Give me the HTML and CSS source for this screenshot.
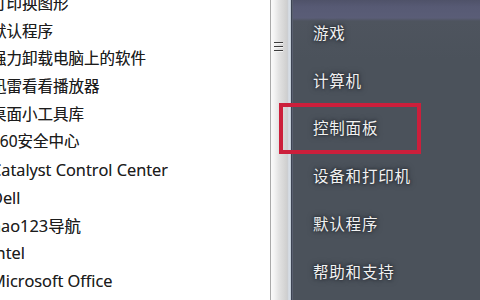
FILE: index.html
```html
<!DOCTYPE html>
<html lang="zh-CN">
<head>
<meta charset="utf-8">
<title>开始菜单</title>
<link rel="stylesheet" href="styles.css">
</head>
<body>
<div class="menu">
  <div class="programs">
    <ul class="prog-list">
      <li>打印换图形</li>
      <li>默认程序</li>
      <li>强力卸载电脑上的软件</li>
      <li>迅雷看看播放器</li>
      <li>桌面小工具库</li>
      <li>360安全中心</li>
      <li class="latin">Catalyst Control Center</li>
      <li class="latin">Dell</li>
      <li class="latin">hao123导航</li>
      <li class="latin">Intel</li>
      <li class="latin">Microsoft Office</li>
    </ul>
  </div>
  <div class="scrollbar">
    <div class="thumb">
      <span class="grip"></span>
      <span class="grip"></span>
      <span class="grip"></span>
    </div>
  </div>
  <div class="places">
    <ul class="place-list">
      <li><span class="label">游戏</span></li>
      <li><span class="label">计算机</span></li>
      <li><span class="label">控制面板</span></li>
      <li><span class="label">设备和打印机</span></li>
      <li><span class="label">默认程序</span></li>
      <li><span class="label">帮助和支持</span></li>
    </ul>
  </div>
  <div class="highlight"></div>
</div>
</body>
</html>
```

FILE: styles.css
```css
* { box-sizing: border-box; }
html, body {
  margin: 0;
  padding: 0;
}
body {
  width: 480px;
  height: 300px;
  overflow: hidden;
  background: #fff;
}
.menu {
  position: relative;
  display: flex;
  width: 480px;
  height: 300px;
  overflow: hidden;
}
.programs {
  width: 270px;
  flex: none;
  background: #fff;
  overflow: hidden;
}
.prog-list {
  list-style: none;
  margin: -10px 0 0 -9px;
  padding: 0;
}
.prog-list li {
  height: 27.7px;
  line-height: 27.7px;
  white-space: nowrap;
  font-family: "Open Sans", "Noto Sans CJK SC", sans-serif;
  font-size: 15.5px;
  color: #1c1c1c;
  text-shadow: 0 0 0.6px rgba(0,0,0,0.5);
}
.prog-list li.latin {
  font-size: 16.4px;
}
.scrollbar {
  width: 22px;
  flex: none;
  display: flex;
  border-left: 1px solid #a9a9a9;
  border-right: 1px solid #3c4352;
  background: linear-gradient(to right, #fafafa 0, #f4f4f4 3px, #e2e2e2 8px, #cfcfcf 16px, #c9cdd3 17px, #dfe5ec 18px, #b9c3cf 20px);
}
.thumb {
  width: 100%;
  padding: 42px 0 0 3px;
  display: flex;
  flex-direction: column;
  gap: 2px;
}
.grip {
  display: block;
  width: 9px;
  height: 2px;
  border-top: 1px solid #3c3c3c;
  border-bottom: 1px solid #f4f4f4;
}
.places {
  flex: 1;
  background: linear-gradient(to bottom, #4f5269 0, #575a74 7px, #5a5d77 18px, #4e545e 21px, #4b525b 60px, #4b525b 100%);
  border-left: 1px solid #5a6070;
}
.place-list {
  list-style: none;
  margin: 0;
  padding: 8px 0 0 20px;
}
.place-list li {
  height: 47.8px;
  display: flex;
  align-items: center;
}
.label {
  font-family: "Noto Sans CJK SC", sans-serif;
  font-size: 15.5px;
  letter-spacing: 0.8px;
  color: #f2f2f2;
  text-shadow: 0 0 3px rgba(20,24,30,0.9), 0 0 6px rgba(20,24,30,0.6);
}
.highlight {
  position: absolute;
  left: 279px;
  top: 103px;
  width: 142px;
  height: 51px;
  border: 4px solid #cc1f3b;
}
```
